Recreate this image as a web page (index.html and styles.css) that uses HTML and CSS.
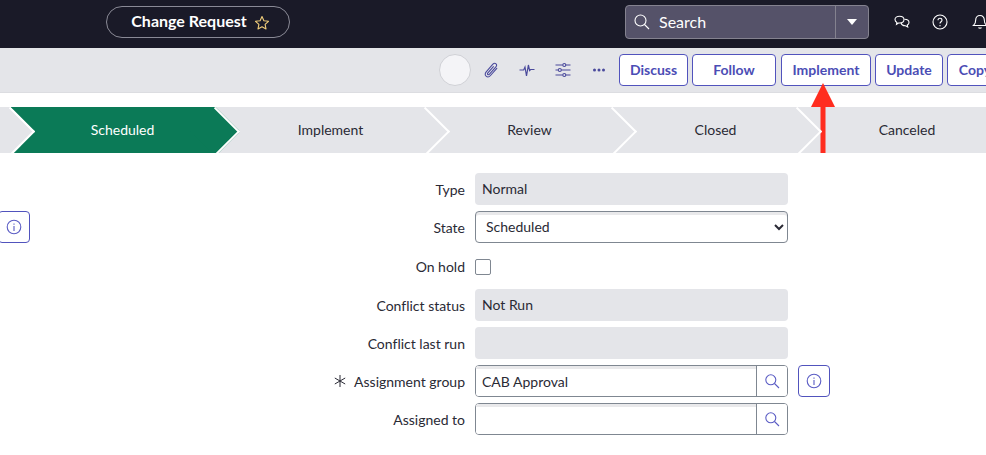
FILE: index.html
```html
<!DOCTYPE html>
<html lang="en">

<head>
    <meta charset="UTF-8">
    <meta name="viewport" content="width=device-width, initial-scale=1.0">
    <title>Change Request</title>
    <link rel="stylesheet" href="styles.css">
</head>

<body>

    <header class="topBar">
        <div class="titlePill">
            <span class="pillText">Change Request</span>
            <svg class="star" width="16" height="16" viewBox="0 0 16 16">
                <path d="M8 1.600l1.900 4.200 4.600.5-3.400 3.100.9 4.500L8 11.700l-4 2.200.9-4.500L1.500 6.300l4.600-.5z" fill="none" stroke="#f0cd7a" stroke-width="1.100" stroke-linejoin="round" />
            </svg>
        </div>

        <div class="searchBox">
            <div class="searchMain">
                <svg width="18" height="18" viewBox="0 0 18 18" fill="none" stroke="#fff" stroke-width="1.100">
                    <circle cx="7.500" cy="7.500" r="5.500" />
                    <path d="M11.500 11.500l4.500 4.500" />
                </svg>
                <span class="searchText">Search</span>
            </div>
            <div class="searchCaret"></div>
        </div>

        <svg class="topIcon chatIcon" width="18" height="18" viewBox="0 0 18 18" fill="none" stroke="#fff" stroke-width="1.100">
            <path d="M6.500 3.200c2.600 0 4.500 1.500 4.500 3.400s-1.900 3.400-4.500 3.400l-1 0-2 1.300.4-1.900C2.700 8.800 2 7.800 2 6.600c0-1.900 2-3.400 4.500-3.400z" />
            <path d="M11.500 6.300c2.500 0 4.500 1.400 4.500 3.200 0 1.100-.6 2-1.700 2.600l.4 1.900-2.200-1.300c-2 .1-3.900-.8-4.500-2.700" />
        </svg>
        <svg class="topIcon helpIcon" width="16" height="16" viewBox="0 0 16 16" fill="none" stroke="#fff" stroke-width="1.100">
            <circle cx="8" cy="8" r="7" />
            <path d="M6 6.300c0-1.200.9-2 2-2s2 .8 2 1.900c0 1.500-2 1.600-2 3.300" />
            <path d="M8 11v1.200" />
        </svg>
        <svg class="topIcon bellIcon" width="16" height="18" viewBox="0 0 16 18" fill="none" stroke="#fff" stroke-width="1.100">
            <path d="M8 2.500c-2.800 0-4.300 2-4.300 4.500 0 3-.7 4.300-2.200 5.500h13c-1.500-1.200-2.200-2.500-2.200-5.500 0-2.500-1.500-4.500-4.300-4.500z" />
            <path d="M6.500 14.500c.4.800 2.600.8 3 0" />
        </svg>
    </header>

    <div class="toolBar">
        <div class="avatar"></div>

        <svg class="toolIcon" width="18" height="18" viewBox="0 0 18 18" fill="none" stroke="#4a4a9c" stroke-width="1.100" stroke-linecap="round">
            <path d="M14.800 7.300l-6.300 7.200c-1.300 1.500-3.200 1.700-4.400.7s-1.200-2.900.1-4.400l6.700-7.600c.9-1 2.200-1.200 3.100-.4s.8 2.100-.1 3.100l-6.400 7.300c-.5.600-1.200.7-1.700.3s-.4-1.100.1-1.700l5.500-6.200" />
        </svg>
        <svg class="toolIcon" width="18" height="18" viewBox="0 0 18 18" fill="none" stroke="#4a4a9c" stroke-width="1.200">
            <path d="M1.500 9h4.200l1.300-3 1.500 9 1.900-11 1.200 5.500 1-1h3.900" />
        </svg>
        <svg class="toolIcon" width="18" height="18" viewBox="0 0 18 18" fill="none" stroke="#4a4a9c" stroke-width="1.100">
            <path d="M1.500 4h7.300M11.800 4h4.700M1.500 9h2.800M7.200 9h9.300M1.500 14h7.300M11.800 14h4.700" />
            <circle cx="10.300" cy="4" r="1.500" />
            <circle cx="5.800" cy="9" r="1.500" />
            <circle cx="10.300" cy="14" r="1.500" />
        </svg>
        <svg class="toolIcon" width="18" height="18" viewBox="0 0 18 18" fill="#4a4a9c">
            <circle cx="4.500" cy="9" r="1.500" />
            <circle cx="9" cy="9" r="1.500" />
            <circle cx="13.500" cy="9" r="1.500" />
        </svg>

        <div class="toolButtons">
            <button type="button" class="btn discussBtn">Discuss</button>
            <button type="button" class="btn followBtn">Follow</button>
            <button type="button" class="btn implementBtn">Implement</button>
            <button type="button" class="btn updateBtn">Update</button>
            <button type="button" class="btn copyBtn">Copy</button>
        </div>
    </div>

    <div class="flow">
        <div class="step stepStub"></div>
        <div class="step stepActive stepScheduled"><span>Scheduled</span></div>
        <div class="step stepImplement"><span>Implement</span></div>
        <div class="step stepReview"><span>Review</span></div>
        <div class="step stepClosed"><span>Closed</span></div>
        <div class="step stepCanceled"><span>Canceled</span></div>
    </div>

    <form class="form">
        <div class="row">
            <label>Type</label>
            <div class="field readOnly">Normal</div>
        </div>

        <div class="row">
            <label class="labelWithInfo">
                <button type="button" class="infoBtn outerInfo">
                    <svg width="16" height="16" viewBox="0 0 16 16" fill="none" stroke="#5a5cc4" stroke-width="1.100">
                        <circle cx="8" cy="8" r="6.800" />
                        <path d="M8 4.500v1.300M8 7v5" />
                    </svg>
                </button>
                <span>State</span>
            </label>
            <select class="field selectField">
                <option>Scheduled</option>
            </select>
        </div>

        <div class="row holdRow">
            <label>On hold</label>
            <input type="checkbox" class="check">
        </div>

        <div class="row">
            <label>Conflict status</label>
            <div class="field readOnly">Not Run</div>
        </div>

        <div class="row">
            <label>Conflict last run</label>
            <div class="field readOnly"></div>
        </div>

        <div class="row">
            <label class="required">
                <svg width="12" height="12" viewBox="0 0 12 12" fill="none" stroke="#2a2a35" stroke-width="1">
                    <path d="M6 0v12M.8 3l10.400 6M11.200 3L.8 9" />
                </svg>
                <span>Assignment group</span>
            </label>
            <div class="lookup">
                <input type="text" value="CAB Approval">
                <button type="button" class="lookupBtn">
                    <svg width="16" height="16" viewBox="0 0 16 16" fill="none" stroke="#5a5cc4" stroke-width="1.100">
                        <circle cx="6.800" cy="6.800" r="5" />
                        <path d="M10.500 10.500l4.500 4.500" />
                    </svg>
                </button>
            </div>
            <button type="button" class="infoBtn">
                <svg width="16" height="16" viewBox="0 0 16 16" fill="none" stroke="#5a5cc4" stroke-width="1.100">
                    <circle cx="8" cy="8" r="6.800" />
                    <path d="M8 4.500v1.300M8 7v5" />
                </svg>
            </button>
        </div>

        <div class="row">
            <label>Assigned to</label>
            <div class="lookup">
                <input type="text">
                <button type="button" class="lookupBtn">
                    <svg width="16" height="16" viewBox="0 0 16 16" fill="none" stroke="#5a5cc4" stroke-width="1.100">
                        <circle cx="6.800" cy="6.800" r="5" />
                        <path d="M10.500 10.500l4.500 4.500" />
                    </svg>
                </button>
            </div>
        </div>
    </form>

    <!-- annotation drawn over the page -->
    <svg class="redArrow" width="24" height="70" viewBox="0 0 24 70">
        <path d="M12 0L24 24H14.500V70H9.500V24H0z" fill="#ff2d1f" />
    </svg>

</body>

</html>
```

FILE: styles.css
```css
* {
    box-sizing: border-box;
    font-family: Lato, "Open Sans", Arial, sans-serif;
}

html,
body {
    margin: 0;
    height: 455px;
    overflow: hidden;
    background-color: white;
    color: #2a2a35;
    font-size: 14px;
}

/* top bar */

.topBar {
    display: flex;
    align-items: center;
    height: 48px;
    padding-left: 106px;
    padding-bottom: 4px;
    background-color: #1a1a28;
    color: white;
}

.titlePill {
    display: flex;
    flex: none;
    align-items: center;
    justify-content: center;
    gap: 7px;
    width: 184px;
    height: 32px;
    padding-left: 5px;
    border: 1px solid #8a8a96;
    border-radius: 16px;
    font-size: 16px;
    font-weight: 700;
}

.pillText {
    margin-top: -3px;
}

.star {
    margin-top: 1px;
}

.searchBox {
    display: flex;
    flex: none;
    width: 244px;
    height: 34px;
    margin-left: 335px;
    background-color: #555269;
    border: 1px solid #84828f;
    border-radius: 4px;
}

.searchMain {
    display: flex;
    align-items: center;
    gap: 8px;
    width: 210px;
    padding-left: 7px;
    border-right: 1px solid #84828f;
    font-size: 16px;
}

.searchText {
    margin-top: -2px;
}

.searchCaret {
    width: 0;
    height: 0;
    margin: 13px 0 0 11px;
    border-left: 5.500px solid transparent;
    border-right: 5.500px solid transparent;
    border-top: 6px solid white;
}

.topIcon {
    flex: none;
}

.chatIcon {
    margin-left: 24px;
}

.helpIcon {
    margin-left: 21px;
}

.bellIcon {
    margin-left: 24px;
}

/* toolbar */

.toolBar {
    display: flex;
    align-items: center;
    height: 45px;
    padding-left: 439px;
    background-color: #e4e5e9;
    border-bottom: 1px solid #dcdde1;
}

.avatar {
    flex: none;
    width: 32px;
    height: 32px;
    margin-right: 11px;
    background-color: #f4f4f7;
    border: 1px solid #d0d1d6;
    border-radius: 50%;
}

.toolIcon {
    flex: none;
    margin-right: 18px;
}

.toolButtons {
    display: flex;
    gap: 4px;
    margin-left: -7px;
}

.btn {
    flex: none;
    height: 32px;
    padding: 0 0 1px;
    background-color: white;
    border: 1px solid #5153bd;
    border-radius: 4px;
    color: #4b4db5;
    font-size: 14px;
    font-weight: 700;
}

.discussBtn {
    width: 69px;
}

.followBtn {
    width: 84px;
}

.implementBtn {
    width: 90px;
    margin-left: 1px;
}

.updateBtn {
    width: 68px;
}

.copyBtn {
    width: 56px;
}

/* process flow */

.flow {
    display: flex;
    width: 1000px;
    height: 46px;
    margin-top: 14px;
    overflow: hidden;
    background-color: #e4e5e9;
}

.step {
    position: relative;
    display: flex;
    flex: none;
    align-items: center;
    justify-content: center;
    height: 46px;
    padding-left: 22px;
    padding-bottom: 2px;
    background-color: #e4e5e9;
    color: #2a2a35;
}

/* the point of each step, it lies over the next one */
.step::after {
    content: "";
    position: absolute;
    top: 6.700px;
    right: -17.300px;
    width: 32.600px;
    height: 32.600px;
    background-color: #e4e5e9;
    border-top: 2px solid white;
    border-right: 2px solid white;
    transform: rotate(45deg);
    z-index: 1;
}

.stepStub {
    width: 10px;
    padding: 0;
}

.stepScheduled {
    width: 205px;
    padding-left: 20px;
}

.stepActive {
    background-color: #0b7a57;
    color: white;
}

.stepActive::after {
    background-color: #0b7a57;
}

.stepImplement {
    width: 210px;
    padding-left: 21px;
}

.stepReview {
    width: 187px;
}

.stepClosed {
    width: 185px;
}

.stepCanceled {
    width: 198px;
}

.stepCanceled::after {
    display: none;
}

/* form */

.form {
    display: flex;
    flex-direction: column;
    gap: 6px;
    margin-top: 20px;
}

.row {
    display: flex;
    align-items: center;
    height: 32px;
}

.holdRow {
    height: 34px;
}

.row label {
    display: flex;
    flex: none;
    align-items: center;
    justify-content: flex-end;
    width: 465px;
    margin-right: 10px;
    font-size: 14px;
    font-variant-ligatures: none;
    color: #2a2a35;
}

.row .labelWithInfo {
    justify-content: space-between;
}

.row .required {
    gap: 8px;
}

.field {
    flex: none;
    width: 313px;
    height: 32px;
    border-radius: 4px;
    font-size: 14px;
}

.readOnly {
    display: flex;
    align-items: center;
    padding: 0 0 2px 7px;
    background-color: #e4e5e9;
    color: #2a2a35;
}

.selectField {
    padding: 0 0 2px 6px;
    background-color: white;
    border: 1px solid #7f8791;
    box-shadow: inset 0 3px 0 #e9e9eb;
    color: #2a2a35;
}

.check {
    width: 16px;
    height: 16px;
    margin: 1px 0 0;
    appearance: none;
    background-color: white;
    border: 1px solid #7f8791;
    border-radius: 2px;
}

.lookup {
    display: flex;
    flex: none;
    width: 313px;
    height: 32px;
    border: 1px solid #7f8791;
    border-radius: 4px;
    overflow: hidden;
}

.lookup input {
    flex: 1;
    min-width: 0;
    padding: 0 0 0 6px;
    border: none;
    border-right: 1px solid #7f8791;
    outline: none;
    box-shadow: inset 0 3px 0 #e9e9eb;
    font-size: 14px;
    color: #2a2a35;
}

.lookupBtn {
    display: flex;
    flex: none;
    align-items: center;
    justify-content: center;
    width: 30px;
    padding: 0;
    background-color: white;
    border: none;
}

.infoBtn {
    display: flex;
    flex: none;
    align-items: center;
    justify-content: center;
    width: 32px;
    height: 32px;
    margin-left: 10px;
    padding: 0;
    background-color: white;
    border: 1px solid #5153bd;
    border-radius: 4px;
}

.outerInfo {
    margin-left: -2px;
}

.redArrow {
    position: absolute;
    left: 811px;
    top: 83px;
}
```
